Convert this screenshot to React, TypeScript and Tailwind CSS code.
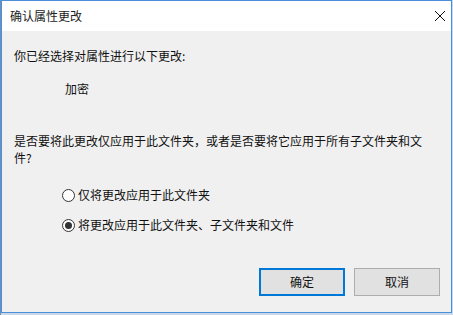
import React from "react";

const font = { fontFamily: '"Noto Sans CJK SC", "Noto Sans", sans-serif' };

function Radio({ checked }: { checked?: boolean }) {
  return (
    <span className="relative w-[13px] h-[13px] rounded-full border border-[#333333] bg-white flex items-center justify-center shrink-0">
      {checked && <span className="w-[7px] h-[7px] rounded-full bg-[#333333]" />}
    </span>
  );
}

export default function App() {
  return (
    <div className="w-[453px] h-[315px] bg-[#c9d9ea] relative overflow-hidden" style={font}>
      <div className="absolute left-0 top-0 w-[1px] h-[315px] bg-[#6f8fb5]" />
      <div className="ml-[1px] w-[451px] h-[313px] border border-[#4a8fdb] flex flex-col text-[12px] leading-[16px] text-[#111]">
        <div className="h-[30px] bg-white flex items-center justify-between pl-[8px] pr-[5px] shrink-0">
          <span className="text-[#222]">确认属性更改</span>
          <svg width="12" height="12" viewBox="0 0 12 12">
            <path d="M1 1L11 11M11 1L1 11" stroke="#111" strokeWidth="1" />
          </svg>
        </div>
        <div className="flex-1 bg-[#f0f0f0] flex flex-col pl-[12px] pr-[11px]">
          <div className="mt-[17px]">你已经选择对属性进行以下更改:</div>
          <div className="mt-[17px] pl-[51px]">加密</div>
          <div className="mt-[35px] leading-[17px]">
            是否要将此更改仅应用于此文件夹，或者是否要将它应用于所有子文件夹和文
            <br />
            件?
          </div>
          <div className="mt-[21px] pl-[48px] flex items-center gap-[3px]">
            <Radio />
            <span>仅将更改应用于此文件夹</span>
          </div>
          <div className="mt-[14px] pl-[48px] flex items-center gap-[3px]">
            <Radio checked />
            <span>将更改应用于此文件夹、子文件夹和文件</span>
          </div>
          <div className="mt-auto mb-[16px] flex justify-end gap-[9px]">
            <button className="w-[86px] h-[28px] border-2 border-[#0078d7] bg-[#e1e1e1] text-[12px] text-[#111]">
              确定
            </button>
            <button className="w-[86px] h-[28px] border border-[#adadad] bg-[#e1e1e1] text-[12px] text-[#111]">
              取消
            </button>
          </div>
        </div>
      </div>
    </div>
  );
}
